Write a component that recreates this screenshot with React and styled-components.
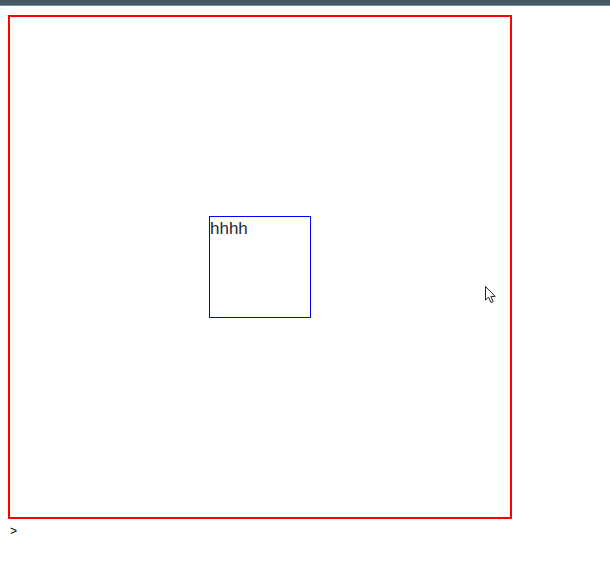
import React from 'react'
import styled, { createGlobalStyle } from 'styled-components'

const GlobalStyle = createGlobalStyle`
  html, body {
    margin: 0;
    padding: 0;
    background: #fff;
  }
  body {
    font-family: "Liberation Sans", Arial, sans-serif;
  }
`

const TopBar = styled.div`
  height: 5px;
  background: #455a64;
  border-bottom: 1px solid #78909c;
`

const Stage = styled.div`
  padding: 9px 0 0 8px;
`

const Frame = styled.div`
  position: relative;
  width: 500px;
  height: 500px;
  border: 2px solid #ff0000;
  display: flex;
  align-items: center;
  justify-content: center;
`

const Tile = styled.div`
  width: 100px;
  height: 100px;
  border: 1px solid #0000ff;
  font-size: 17px;
  line-height: 23px;
  color: #1c2b33;
`

const Pointer = styled.svg`
  position: absolute;
  left: 474px;
  top: 268px;
`

const Prompt = styled.div`
  margin: 5px 0 0 2px;
  font-size: 12px;
  line-height: 14px;
  color: #000;
`

function Cursor() {
  return (
    <Pointer width="14" height="20" viewBox="0 0 14 20">
      <path
        d="M1.5 1.5 L1.5 15 L4.6 12.2 L7 17.6 L9.2 16.6 L6.9 11.4 L11.2 11.4 Z"
        fill="#fff"
        stroke="#222"
        strokeWidth="1"
        strokeLinejoin="round"
      />
    </Pointer>
  )
}

export default function App() {
  return (
    <>
      <GlobalStyle />
      <TopBar />
      <Stage>
        <Frame>
          <Tile>hhhh</Tile>
          <Cursor />
        </Frame>
        <Prompt>&gt;</Prompt>
      </Stage>
    </>
  )
}
